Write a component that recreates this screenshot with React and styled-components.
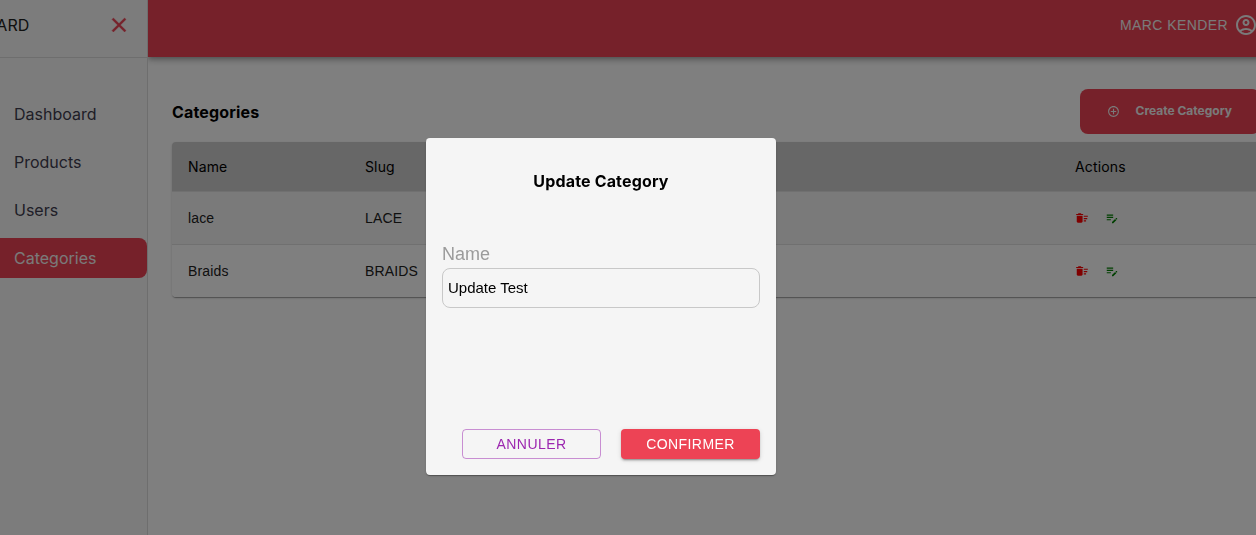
import React from "react";
import styled, { createGlobalStyle, css } from "styled-components";
import {
  MdAddCircleOutline,
  MdClose,
  MdDeleteSweep,
  MdEditNote,
  MdOutlineAccountCircle,
} from "react-icons/md";

const inter = `Inter, "Liberation Sans", sans-serif`;
const arial = `"Liberation Sans", Arial, sans-serif`;
const accent = "#ed4355";

const GlobalStyle = createGlobalStyle`
  *, *::before, *::after { box-sizing: border-box; }
  body { margin: 0; background: #fff; font-family: ${inter}; color: #000; }
  h1, h2, p, ul { margin: 0; padding: 0; }
  button, input { font: inherit; margin: 0; }
`;

const Viewport = styled.div`
  min-height: 100vh;
  overflow: hidden;
  display: flex;
`;

const Shell = styled.div`
  flex: 1;
  min-width: 0;
  display: flex;
  margin: 0 -28px 0 -82px;
`;

const Sidebar = styled.aside`
  position: relative;
  z-index: 1;
  flex: 0 0 230px;
  background: #f8f8f8;
  border-right: 1px solid #dcdcdc;
`;

const SidebarHead = styled.div`
  height: 58px;
  padding: 0 16px 8px 12px;
  display: flex;
  align-items: center;
  justify-content: space-between;
  border-bottom: 1px solid #dcdcdc;
  font-size: 16px;
  line-height: 22px;
  color: #212121;
`;

const CloseButton = styled.button`
  display: flex;
  padding: 0;
  border: 0;
  background: none;
  color: ${accent};
  font-size: 24px;
  path:last-child {
    stroke: currentColor;
    stroke-width: 0.4;
  }
`;

const NavList = styled.ul`
  list-style: none;
  padding-top: 36px;
  display: flex;
  flex-direction: column;
  gap: 8px;
`;

const NavLink = styled.a`
  display: block;
  height: 40px;
  padding-left: 96px;
  line-height: 40px;
  font-size: 16px;
  text-decoration: none;
  color: #3f3d4f;
  border-radius: 8px;
  ${(p) =>
    p.$active &&
    css`
      background: ${accent};
      color: #f4f4f4;
    `}
`;

const Main = styled.div`
  flex: 1;
  min-width: 0;
`;

const TopBar = styled.header`
  height: 57px;
  padding: 0 26px 8px;
  display: flex;
  align-items: center;
  justify-content: flex-end;
  gap: 6px;
  background: ${accent};
  color: #f4f4f4;
  font-family: ${arial};
  font-size: 14px;
  letter-spacing: 0.03em;
  box-shadow: 0 2px 4px -1px rgba(0, 0, 0, 0.2), 0 4px 5px rgba(0, 0, 0, 0.14),
    0 1px 10px rgba(0, 0, 0, 0.12);
  svg {
    font-size: 24px;
  }
`;

const Content = styled.main`
  padding: 32px 24px;
`;

const TitleRow = styled.div`
  display: flex;
  align-items: center;
  justify-content: space-between;
  margin-bottom: 8px;
`;

const Title = styled.h1`
  font-size: 16px;
  font-weight: 700;
  letter-spacing: 0.01em;
`;

const CreateButton = styled.button`
  width: 180px;
  height: 45px;
  padding: 0 28px 0 27px;
  display: flex;
  align-items: center;
  justify-content: space-between;
  border: 0;
  border-radius: 8px;
  background: ${accent};
  color: #f4f4f4;
  font-size: 12px;
  line-height: 16px;
  font-weight: 700;
  svg {
    font-size: 13px;
  }
`;

const CreateLabel = styled.span`
  padding-bottom: 2px;
`;

const TableCard = styled.div`
  border-radius: 4px;
  overflow: hidden;
  box-shadow: 0 2px 1px -1px rgba(0, 0, 0, 0.2), 0 1px 1px rgba(0, 0, 0, 0.14),
    0 1px 3px rgba(0, 0, 0, 0.12);
`;

const Table = styled.table`
  width: 100%;
  table-layout: fixed;
  border-collapse: separate;
  border-spacing: 0;
  font-size: 14px;
`;

const HeadCell = styled.th`
  width: ${(p) => p.$width || "auto"};
  height: 50px;
  padding: 0 16px;
  text-align: left;
  font-weight: 400;
  letter-spacing: 0.01em;
  background: #cecece;
  border-bottom: 1px solid #e0e0e0;
`;

const Row = styled.tr`
  background: ${(p) => (p.$striped ? "#f5f5f5" : "#fff")};
  &:not(:last-child) td {
    height: 53px;
    border-bottom: 1px solid #e0e0e0;
  }
`;

const Cell = styled.td`
  height: 52px;
  padding: 0 16px;
  font-family: ${arial};
  letter-spacing: 0.01em;
  color: #212121;
`;

const Actions = styled.div`
  display: flex;
  gap: 16px;
`;

const IconButton = styled.button`
  display: flex;
  padding: 0;
  border: 0;
  background: none;
  font-size: 14px;
  color: ${(p) => p.$color};
`;

const Backdrop = styled.div`
  position: fixed;
  z-index: 2;
  inset: 0 -28px -78px -82px;
  display: flex;
  align-items: center;
  justify-content: center;
  background: rgba(0, 0, 0, 0.5);
`;

const Dialog = styled.form`
  width: 350px;
  padding: 31px 16px 16px;
  display: flex;
  flex-direction: column;
  background: #f5f5f5;
  border-radius: 4px;
  font-family: ${arial};
  box-shadow: 0 2px 1px -1px rgba(0, 0, 0, 0.2), 0 1px 1px rgba(0, 0, 0, 0.14),
    0 1px 3px rgba(0, 0, 0, 0.12);
`;

const DialogTitle = styled.h2`
  margin-bottom: 51px;
  font-family: ${inter};
  font-size: 16px;
  line-height: 24px;
  font-weight: 700;
  letter-spacing: 0.01em;
  text-align: center;
`;

const Label = styled.label`
  font-size: 18px;
  line-height: 20px;
  margin-bottom: 4px;
  color: #9b9b9b;
`;

const TextInput = styled.input`
  width: 100%;
  height: 40px;
  padding: 0 5px 2px;
  border: 1px solid #c8c8c8;
  border-radius: 8px;
  background: transparent;
  font-size: 15px;
  color: #000;
  outline: none;
`;

const DialogActions = styled.div`
  margin-top: 121px;
  padding-left: 20px;
  display: grid;
  grid-template-columns: 1fr 1fr;
  gap: 20px;
`;

const DialogButton = styled.button`
  height: 30px;
  padding: 0;
  border-radius: 4px;
  font-size: 14px;
  letter-spacing: 0.03em;
  text-transform: uppercase;
  ${(p) =>
    p.$primary
      ? css`
          border: 0;
          background: ${accent};
          color: #fff;
          box-shadow: 0 3px 1px -2px rgba(0, 0, 0, 0.2),
            0 2px 2px rgba(0, 0, 0, 0.14), 0 1px 5px rgba(0, 0, 0, 0.12);
        `
      : css`
          border: 1px solid rgba(156, 39, 176, 0.5);
          background: transparent;
          color: #9c27b0;
        `}
`;

const links = ["Dashboard", "Products", "Users", "Categories"];
const categories = [
  { name: "lace", slug: "LACE" },
  { name: "Braids", slug: "BRAIDS" },
];

export default function App() {
  return (
    <>
      <GlobalStyle />
      <Viewport>
        <Shell>
          <Sidebar>
            <SidebarHead>
              <span>DASHBOARD</span>
              <CloseButton type="button" aria-label="Close menu">
                <MdClose />
              </CloseButton>
            </SidebarHead>
            <nav>
              <NavList>
                {links.map((link) => (
                  <li key={link}>
                    <NavLink href="#" $active={link === "Categories"}>
                      {link}
                    </NavLink>
                  </li>
                ))}
              </NavList>
            </nav>
          </Sidebar>
          <Main>
            <TopBar>
              <span>MARC KENDER</span>
              <MdOutlineAccountCircle />
            </TopBar>
            <Content>
              <TitleRow>
                <Title>Categories</Title>
                <CreateButton type="button">
                  <MdAddCircleOutline />
                  <CreateLabel>Create Category</CreateLabel>
                </CreateButton>
              </TitleRow>
              <TableCard>
                <Table>
                  <thead>
                    <tr>
                      <HeadCell $width="177px">Name</HeadCell>
                      <HeadCell>Slug</HeadCell>
                      <HeadCell $width="201px">Actions</HeadCell>
                    </tr>
                  </thead>
                  <tbody>
                    {categories.map((category, index) => (
                      <Row key={category.slug} $striped={index % 2 === 0}>
                        <Cell>{category.name}</Cell>
                        <Cell>{category.slug}</Cell>
                        <Cell>
                          <Actions>
                            <IconButton type="button" $color="#ff0000" aria-label="Delete">
                              <MdDeleteSweep />
                            </IconButton>
                            <IconButton type="button" $color="#008000" aria-label="Edit">
                              <MdEditNote />
                            </IconButton>
                          </Actions>
                        </Cell>
                      </Row>
                    ))}
                  </tbody>
                </Table>
              </TableCard>
            </Content>
          </Main>
        </Shell>
      </Viewport>
      <Backdrop>
        <Dialog role="dialog" aria-labelledby="dialog-title">
          <DialogTitle id="dialog-title">Update Category</DialogTitle>
          <Label htmlFor="category-name">Name</Label>
          <TextInput id="category-name" type="text" defaultValue="Update Test" />
          <DialogActions>
            <DialogButton type="button">Annuler</DialogButton>
            <DialogButton type="button" $primary>
              Confirmer
            </DialogButton>
          </DialogActions>
        </Dialog>
      </Backdrop>
    </>
  );
}
